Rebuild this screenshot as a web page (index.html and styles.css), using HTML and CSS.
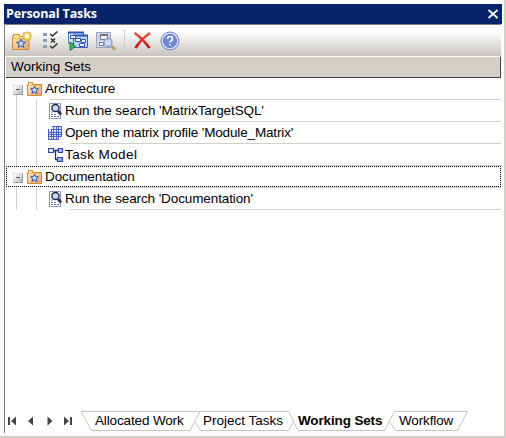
FILE: index.html
```html
<!DOCTYPE html>
<html lang="en"><head><meta charset="utf-8"><title>Personal Tasks</title><link rel="stylesheet" href="styles.css"></head>
<body>
<svg class="defs" aria-hidden="true">
<defs>
<linearGradient id="gold" x2="1" y2="1"><stop stop-color="#fff0a8"/><stop offset="1" stop-color="#f0a070"/></linearGradient>
<linearGradient id="blue" x2="1" y2="1"><stop stop-color="#f8fbff"/><stop offset="1" stop-color="#86a6ea"/></linearGradient>
<linearGradient id="red" x2="0" y2="1"><stop stop-color="#f45234"/><stop offset="1" stop-color="#c80808"/></linearGradient>
</defs>
<symbol id="folder" viewBox="0 0 16 16"><path d="M1.500 14.500v-11h1v-2h4v2h9v11z" fill="url(#gold)" stroke="#d08a30"/><path d="M2 4.500h13" stroke="#f3c468"/><path d="M8.500 5l1.100 2.600 2.900.2-2.200 1.800.8 2.900-2.600-1.500-2.600 1.500.8-2.900L4.500 7.800l2.900-.2z" fill="#c4e0ff" stroke="#2f50b8"/></symbol>
<symbol id="search" viewBox="0 0 16 16"><path d="M1.500.5h11v15h-11z" fill="#fff" stroke="#8792cd"/><path d="M3 3h2M3 6h1M3 9h2M3 11.500h6M3 13.500h8" stroke="#6972b4" stroke-dasharray="2 1"/><circle cx="7.500" cy="5" r="3.500" fill="#c9dcf4" stroke="#192442" stroke-width="1.300"/><path d="M10 8l3 3.500" stroke="#223160" stroke-width="2.700"/></symbol>
<symbol id="matrix" viewBox="0 0 16 16"><path d="M4 1h10v11H4zM0 4h11v11H0z" fill="#dfe6ff"/><path d="M4 1.500h10M4 4.500h10M0 7.500h14M0 9.500h14M0 11.500h14M0 14.500h11" stroke="#4a60c4"/><path d="M.5 4v11M3.500 4v11M5.500 1v14M8.500 1v14M10.500 1v14M13.500 1v11" stroke="#4a60c4"/></symbol>
<symbol id="model" viewBox="0 0 16 16"><path d="M5 3.500h5M7.500 4v8.500H10" fill="none" stroke="#26305c" stroke-width="1.300"/><g fill="url(#blue)" stroke="#2a46a8" stroke-width="1.200"><path d="M.5 1.500h5v4h-5zM10.500 1.500h4v4h-4zM9.500 10.500h5v4h-5z"/></g></symbol>
</svg>
<main class="window">
<header class="title"><span>Personal Tasks</span><svg class="close" viewBox="0 0 10 10"><path d="M.5 1l9 8M9.500 1L.5 9" stroke="#fff" stroke-width="1.800"/></svg></header>
<div class="panel">
<nav class="toolbar">
<svg viewBox="0 0 20 20"><path d="M.5 18.500V5.500h1v-2h6v2h9.500v13z" fill="url(#gold)" stroke="#d08a34"/><path d="M1 7.500h15" stroke="#f3bd62"/><path d="M9 8l1.300 3 3.200.3-2.500 2 .8 3.200L9 14.800l-2.800 1.700.8-3.200-2.500-2 3.200-.3z" fill="#b8daff" stroke="#3554bb"/><path d="M15 .5l1.500 1.500 2-.2-.2 2 1.200 1.200-1.200 1.500.2 2-2-.2L15 9.700l-1.500-1.400-2 .2.200-2L10.500 5l1.200-1.200-.2-2 2 .2z" fill="#f8df70" stroke="#d5ad3a"/><circle cx="15" cy="5" r="2" fill="#fffbe0"/></svg>
<svg viewBox="0 0 20 20"><g fill="#8c9db6"><path d="M3 2h4v3H3zM3 8h4v3H3zM3 14h4v3H3z"/></g><g fill="none" stroke="#333" stroke-width="1.500"><path d="M10 3l2.500 2 5-4.500M11 7.500l4 4M15 7.500l-4 4M10 15l2.500 2 5-4.500"/></g></svg>
<svg viewBox="0 0 20 20"><path d="M.5 1.500h15v11H.5z" fill="#c9e0ff" stroke="#5c7fd0"/><path d="M0 1.500h16" stroke="#2d54b8" stroke-width="2"/><path d="M5.500 4.500h14v12h-14z" fill="#b9d5ff" stroke="#3c60bd"/><path d="M5 4.500h15" stroke="#2d54b8" stroke-width="2"/><g fill="#f4f9ff" stroke="#3456aa"><path d="M2.500 4.500h5v3h-5zM7.500 7.500h5v3h-5zM13.500 8.500h4v3h-4zM11.500 12.500h5v3h-5z"/></g><path d="M2 11v8.500l5.500-4.200z" fill="#30b957" stroke="#15843b"/></svg>
<svg viewBox="0 0 20 20"><path d="M.5 1.500h14v15H.5z" fill="#cfd6e8" stroke="#96a3c4"/><path d="M4.500 3.500h7v5h-7zM3.500 11.500h4v3h-4z" fill="#f7f7f7" stroke="#737888"/><path d="M4 4h8" stroke="#737888" stroke-width="2"/><circle cx="12" cy="11.500" r="4" fill="#cddcf1" stroke="#8ca0cc" stroke-width="1.500"/><path d="M15 15l4 3.500" stroke="#b8a468" stroke-width="3"/></svg>
<i class="divider"></i>
<svg class="delete" viewBox="0 0 20 20"><path d="M1.500 2Q9 7 16.500 17M17 2Q8 8 2.500 17" fill="none" stroke="url(#red)" stroke-width="2.500"/></svg>
<svg class="help" viewBox="0 0 20 20"><circle cx="10" cy="10" r="9" fill="#d3dbfa" stroke="#7181ca"/><circle cx="10" cy="10" r="6.500" fill="#7188d8" stroke="#6177c7"/><path d="M7.500 8q0-2.500 2.500-2.500T12.500 8q0 1.200-1.500 2t-1 1.500M10 13v1.500" fill="none" stroke="#fff" stroke-width="1.600"/></svg>
</nav>
<div class="heading"><span>Working Sets</span></div>
<section class="tree">
<div class="row group stem"><i class="toggle"></i><svg><use href="#folder"/></svg><span class="arch">Architecture</span></div>
<div class="row item"><svg><use href="#search"/></svg><span class="target">Run the search 'MatrixTargetSQL'</span></div>
<div class="row item"><svg><use href="#matrix"/></svg><span class="profile">Open the matrix profile 'Module_Matrix'</span></div>
<div class="row item"><svg><use href="#model"/></svg><span class="task">Task Model</span></div>
<div class="row group selected"><i class="toggle"></i><svg><use href="#folder"/></svg><span class="docs">Documentation</span></div>
<div class="row item"><svg><use href="#search"/></svg><span class="searchdoc">Run the search 'Documentation'</span></div>
</section>
<footer>
<div class="arrows"><svg viewBox="0 0 68 12"><path d="M0 2h2v8H0zM8 1.500v9L3 6zM25 1.500v9L20 6zM39.500 1.500v9l5-4.500zM56 1.500v9l5-4.500zM62 2h2v8h-2z" fill="#444"/></svg></div>
<div class="tabs"><svg viewBox="0 0 390 22"><path d="M0 .5H207.500L217 19.500H303.500L313.500.5H386.500L376.500 19.500H314.500L308.500 10.500M0 .5L10.500 19.500H109L119 .5M114 10.500L119.500 19.500H207.500L212.500 10.500" fill="none" stroke="#c7c4be"/></svg><div class="labels"><span class="t1">Allocated Work</span><span class="t2">Project Tasks</span><b class="t3">Working Sets</b><span class="t4">Workflow</span></div></div>
</footer>
</div>
</main></body></html>
```
FILE: styles.css
```css
*{box-sizing:border-box}
body{margin:0;background:#fff;font:13.5px/20px "Liberation Sans",Arial,sans-serif;color:#000}
.defs{position:absolute;width:0;height:0}
.window{width:506px;height:438px;border-right:2px solid #d4d0c8;border-bottom:2px solid #d4d0c8;padding:4px 2px 3px 4px;overflow:hidden}
.title{height:20px;background:#0a246a;color:#fff;display:flex;justify-content:space-between;align-items:center;padding:0 4px 0 2px;font:bold 12.5px/20px "Open Sans","Noto Sans",sans-serif;letter-spacing:-.13px}
.close{width:10px;height:10px}
.panel{height:409px;border-left:1px solid #808080;border-top:1px solid #808080;margin-right:1px;display:flex;flex-direction:column}
.toolbar{height:31px;flex:none;background:linear-gradient(#fff 20%,#c8c5c1);display:flex;align-items:center;padding:0 0 0 7px;gap:8px}
.toolbar svg{width:20px;height:20px;flex:none}
.divider{width:1px;height:22px;background:#ccc}
.toolbar .help{margin-left:-1px}
.heading{height:22px;flex:none;margin-left:1px;border-top:1px solid #fff;border-right:1px solid #404040;border-bottom:1px solid #404040;background:#d4d0c8;padding-left:5px}
.tree{height:333px;flex:none;padding-left:1px}
.row{height:22px;display:flex;align-items:center;background:linear-gradient(#d0d0c8,#d0d0c8) 44px 100%/100% 1px no-repeat;white-space:nowrap;padding-bottom:1px}
.row svg{width:16px;height:16px;flex:none;margin-right:2px}
.group{padding-left:7px}
.group svg{margin:0 3px 0 -1px}
.stem{background:linear-gradient(#d0d0c8,#d0d0c8) 44px 100%/100% 1px no-repeat,linear-gradient(#d0d0c8,#d0d0c8) 10px 100%/1px 6px no-repeat}
.toggle{width:10px;height:10px;margin-top:2px;border:1px solid #999;border-top-color:#ddd;border-left-color:#ddd;background:linear-gradient(#555,#555) center/4px 1px no-repeat,linear-gradient(135deg,#fff,#bbb);margin-right:4px}
.item{padding-left:42px;background:linear-gradient(#d0d0c8,#d0d0c8) 64px 100%/100% 1px no-repeat,linear-gradient(90deg,transparent 10px,#d0d0c8 10px,#d0d0c8 11px,transparent 11px,transparent 30px,#d0d0c8 30px,#d0d0c8 31px,transparent 31px)}
.item svg{margin-right:1px}
.selected{position:relative}
.selected::after{content:"";position:absolute;inset:0 0 1px;border:1px dotted #000}
.arch,.profile{letter-spacing:-.15px}
.target,.docs{letter-spacing:-.09px}
.task{letter-spacing:.4px}
.searchdoc{letter-spacing:-.11px}
footer{height:24px;flex:none;display:flex}
.arrows{width:76px;padding:4px 0 0 3px}
.arrows svg{width:68px;height:12px;display:block}
.tabs{display:grid;width:390px;height:22px}
.tabs>*{grid-area:1/1}
.tabs svg{width:390px;height:22px}
.labels{display:flex;white-space:nowrap;line-height:19px;letter-spacing:-.14px}
.t1{margin-left:14px;width:108px}
.t2{width:95px;letter-spacing:0}
.t3{width:101px}
```
